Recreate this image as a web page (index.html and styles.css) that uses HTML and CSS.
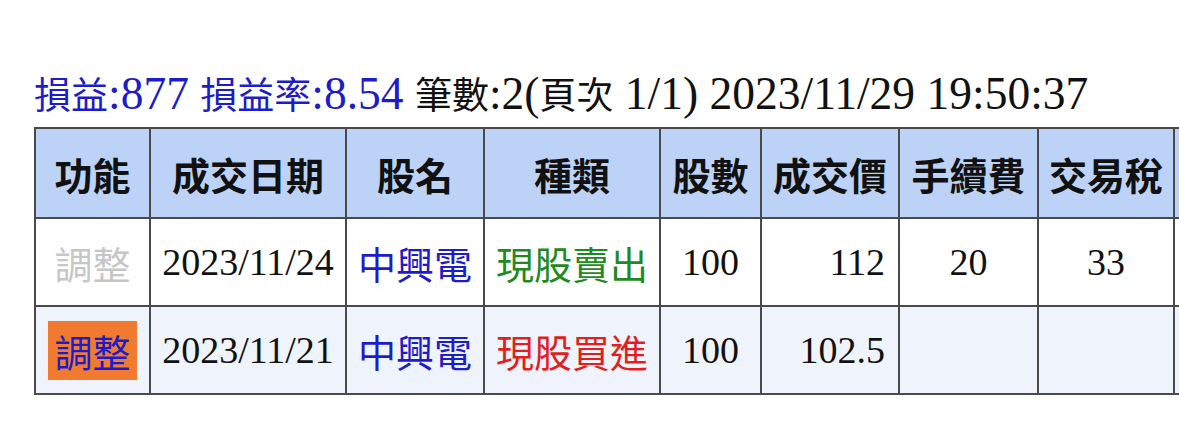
FILE: index.html
```html
<!DOCTYPE html>
<html lang="zh-Hant">
<head>
<meta charset="utf-8">
<link rel="stylesheet" href="styles.css">
</head>
<body>
<div class="page">
  <div class="summary"><span class="pl"><span class="cjk">損益</span>:877 <span class="cjk">損益率</span>:8.54</span> <span class="cjk">筆數</span>:2(<span class="cjk">頁次</span> 1/1) 2023/11/29 19:50:37</div>
  <table class="grid">
    <colgroup>
      <col class="c1"><col class="c2"><col class="c3"><col class="c4"><col class="c5"><col class="c6"><col class="c7"><col class="c8"><col class="c9">
    </colgroup>
    <thead>
      <tr><th>功能</th><th>成交日期</th><th>股名</th><th>種類</th><th>股數</th><th>成交價</th><th>手續費</th><th>交易稅</th><th></th></tr>
    </thead>
    <tbody>
      <tr class="odd">
        <td class="fn"><span class="adj off">調整</span></td>
        <td class="date">2023/11/24</td>
        <td class="name">中興電</td>
        <td class="kind sell">現股賣出</td>
        <td class="num center">100</td>
        <td class="num right">112</td>
        <td class="num center">20</td>
        <td class="num center">33</td>
        <td class="num"></td>
      </tr>
      <tr class="even">
        <td class="fn"><span class="adj on">調整</span></td>
        <td class="date">2023/11/21</td>
        <td class="name">中興電</td>
        <td class="kind buy">現股買進</td>
        <td class="num center">100</td>
        <td class="num right">102.5</td>
        <td class="num center"></td>
        <td class="num center"></td>
        <td class="num"></td>
      </tr>
    </tbody>
  </table>
</div>
</body>
</html>
```

FILE: styles.css
```css
html, body {
  margin: 0;
  padding: 0;
  background: #ffffff;
  overflow: hidden;
}
.page {
  padding: 70px 0 0 34px;
  width: 1400px;
}
.summary {
  font-family: "Liberation Serif", "Noto Sans CJK TC", serif;
  font-size: 45.5px;
  line-height: 46px;
  height: 46px;
  color: #111;
  white-space: nowrap;
  margin-bottom: 11px;
}
.summary .cjk {
  font-family: "Noto Sans CJK TC", sans-serif;
  font-size: 37px;
}
.summary .pl {
  color: #1c1cc8;
}
.grid {
  border-collapse: collapse;
  table-layout: fixed;
  border: 2px solid #4a4a4a;
}
.c1 { width: 115px; }
.c2 { width: 196px; }
.c3 { width: 138px; }
.c4 { width: 176px; }
.c5 { width: 101px; }
.c6 { width: 138px; }
.c7 { width: 139px; }
.c8 { width: 136px; }
.c9 { width: 160px; }
.grid th, .grid td {
  border: 2px solid #4a4a4a;
  padding: 0 6px;
  white-space: nowrap;
}
.grid th {
  height: 88px;
  background: #bcd3f7;
  font-family: "Noto Sans CJK TC", sans-serif;
  font-weight: 700;
  font-size: 38px;
  color: #111;
  text-align: center;
}
.grid td {
  height: 86px;
  font-size: 38px;
  text-align: center;
}
.grid tr.odd td { background: #ffffff; }
.grid tr.even td { background: #eff3fb; }
.fn, .name, .kind {
  font-family: "Noto Sans CJK TC", sans-serif;
}
.date, .num {
  font-family: "Liberation Serif", serif;
  color: #111;
}
.date { text-align: left; padding-left: 10px; }
.num.right { text-align: right; padding-right: 13px; }
.name { color: #1c1cc8; }
.sell { color: #1f8a1f; }
.buy { color: #e21f1f; }
.adj {
  display: inline-block;
  padding: 6px 6px;
  line-height: 47px;
}
.adj.off { color: #c6c6c6; }
.adj.on {
  color: #1c1cc8;
  background: #f07b30;
}
```
